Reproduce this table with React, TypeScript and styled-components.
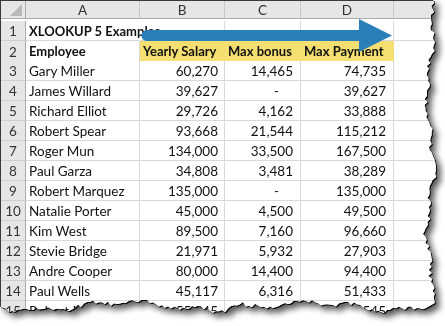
import React from 'react'
import styled, { createGlobalStyle } from 'styled-components'

const GlobalStyle = createGlobalStyle`
  html, body {
    margin: 0;
    padding: 0;
    background: #ffffff;
  }
  body {
    font-family: Lato, "Liberation Sans", sans-serif;
  }
`

const COLS = '25px 114px 85px 76px 93px 52px'

const Page = styled.div`
  width: 445px;
  height: 326px;
  overflow: hidden;
  filter: drop-shadow(1px 1px 0 rgba(0, 0, 0, 0.9))
    drop-shadow(4px 4px 3px rgba(0, 0, 0, 0.65));
`

const Sheet = styled.div<{ $clip: string }>`
  position: relative;
  width: 445px;
  height: 326px;
  background: #ffffff;
  box-sizing: border-box;
  border-top: 1px solid #3a3a3a;
  border-left: 1px solid #3a3a3a;
  clip-path: ${(p) => p.$clip};
`

const Grid = styled.div`
  display: grid;
  grid-template-columns: ${COLS};
  grid-auto-rows: 20px;
  font-size: 13.5px;
  color: #111;
`

const Corner = styled.div`
  height: 18px;
  background: #e6e6e6;
  border-right: 1px solid #ababab;
  border-bottom: 1px solid #ababab;
  box-sizing: border-box;
  position: relative;

  &::after {
    content: '';
    position: absolute;
    right: 3px;
    bottom: 2px;
    width: 12px;
    height: 12px;
    background: #b8b8b8;
    clip-path: polygon(100% 0, 100% 100%, 0 100%);
  }
`

const ColHead = styled.div`
  height: 18px;
  background: #e6e6e6;
  border-right: 1px solid #c8c8c8;
  border-bottom: 1px solid #ababab;
  box-sizing: border-box;
  display: flex;
  align-items: center;
  justify-content: center;
  color: #333;
  font-size: 13.5px;
`

const RowHead = styled.div<{ $tall?: boolean }>`
  background: #e6e6e6;
  border-right: 1px solid #ababab;
  border-bottom: 1px solid #cfcfcf;
  box-sizing: border-box;
  display: flex;
  align-items: center;
  justify-content: center;
  color: #333;
  font-size: 13.5px;
  padding-top: 1px;
  height: ${(p) => (p.$tall ? '22px' : '20px')};
`

const Cell = styled.div<{
  $align?: 'left' | 'right'
  $bold?: boolean
  $fill?: string
  $thick?: boolean
  $noRight?: boolean
  $pad?: number
  $overflow?: boolean
}>`
  box-sizing: border-box;
  height: ${(p) => (p.$thick ? '22px' : '20px')};
  padding: 1px ${(p) => (p.$align === 'right' ? p.$pad ?? 6 : 3)}px 0
    ${(p) => (p.$align === 'right' ? 2 : 3)}px;
  text-align: ${(p) => p.$align ?? 'left'};
  font-weight: ${(p) => (p.$bold ? 700 : 400)};
  font-size: ${(p) => (p.$bold ? '13px' : '13.5px')};
  background: ${(p) => p.$fill ?? '#ffffff'};
  border-right: 1px solid
    ${(p) => (p.$noRight ? 'transparent' : p.$fill ?? '#d9d9d9')};
  border-bottom: ${(p) => (p.$thick ? '2px solid #7f7f7f' : '1px solid #d9d9d9')};
  line-height: 19px;
  white-space: nowrap;
  overflow: ${(p) => (p.$overflow ? 'visible' : 'hidden')};
  position: relative;
  z-index: ${(p) => (p.$overflow ? 1 : 0)};
`

const ArrowLayer = styled.svg`
  position: absolute;
  left: 0;
  top: 0;
  z-index: 5;
  pointer-events: none;
`

type Row = [string, string, string, string]

const rows: Row[] = [
  ['Gary Miller', '60,270', '14,465', '74,735'],
  ['James Willard', '39,627', '-', '39,627'],
  ['Richard Elliot', '29,726', '4,162', '33,888'],
  ['Robert Spear', '93,668', '21,544', '115,212'],
  ['Roger Mun', '134,000', '33,500', '167,500'],
  ['Paul Garza', '34,808', '3,481', '38,289'],
  ['Robert Marquez', '135,000', '-', '135,000'],
  ['Natalie Porter', '45,000', '4,500', '49,500'],
  ['Kim West', '89,500', '7,160', '96,660'],
  ['Stevie Bridge', '21,971', '5,932', '27,903'],
  ['Andre Cooper', '80,000', '14,400', '94,400'],
  ['Paul Wells', '45,117', '6,316', '51,433'],
  ['Robert Murphy', '55,545', '-', '59,545'],
]

// torn paper outline, seeded so it is the same every render
const tornClip = () => {
  let seed = 17
  const rnd = () => {
    seed = (seed * 9301 + 49297) % 233280
    return seed / 233280 - 0.5
  }
  const pts: string[] = ['0px 0px']
  const bottom = 304
  for (let y = 0; y <= bottom; y += 3) {
    const x =
      430 + 3.5 * Math.sin(y / 21) + 2 * Math.sin(y / 6.7 + 1) + rnd() * 4
    pts.push(`${x.toFixed(1)}px ${y}px`)
  }
  for (let x = 426; x >= 0; x -= 3) {
    const y =
      306 +
      4 * Math.sin(x / 29 + 0.4) +
      2 * Math.sin(x / 8.3) +
      rnd() * 4 -
      (x > 225 && x < 245 ? 4 : 0)
    pts.push(`${x}px ${y.toFixed(1)}px`)
  }
  pts.push('0px 311px')
  return `polygon(${pts.join(', ')})`
}

const App = () => {
  const clip = tornClip()
  return (
    <>
      <GlobalStyle />
      <Page>
        <Sheet $clip={clip}>
          <Grid>
            <Corner />
            <ColHead>A</ColHead>
            <ColHead>B</ColHead>
            <ColHead>C</ColHead>
            <ColHead>D</ColHead>
            <ColHead />

            <RowHead>1</RowHead>
            <Cell $bold $noRight $overflow>
              XLOOKUP 5 Examples
            </Cell>
            <Cell />
            <Cell />
            <Cell />
            <Cell />

            <RowHead $tall>2</RowHead>
            <Cell $bold $thick>
              Employee
            </Cell>
            <Cell $bold $thick $fill="#f5df70">
              Yearly Salary
            </Cell>
            <Cell $bold $thick $fill="#f5df70">
              Max bonus
            </Cell>
            <Cell $bold $thick $fill="#f5df70">
              Max Payment
            </Cell>
            <Cell $thick />

            {rows.map((r, i) => (
              <React.Fragment key={r[0]}>
                <RowHead>{i + 3}</RowHead>
                <Cell>{r[0]}</Cell>
                <Cell $align="right" $pad={r[1] === '-' ? 21 : 6}>
                  {r[1]}
                </Cell>
                <Cell $align="right" $pad={r[2] === '-' ? 21 : 7}>
                  {r[2]}
                </Cell>
                <Cell $align="right" $pad={r[3] === '-' ? 21 : 7}>
                  {r[3]}
                </Cell>
                <Cell />
              </React.Fragment>
            ))}
          </Grid>

          <ArrowLayer width="445" height="60" viewBox="0 0 445 60">
            <path
              d="M146 29 L358 29 L358 18 L391 34.5 L358 51 L358 40 L146 40 A5.5 5.5 0 0 1 146 29 Z"
              fill="#2b7fb8"
            />
          </ArrowLayer>
        </Sheet>
      </Page>
    </>
  )
}

export default App
